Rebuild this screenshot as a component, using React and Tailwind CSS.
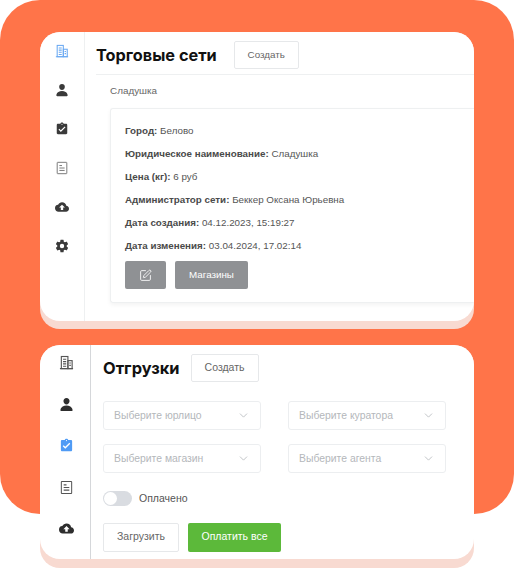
import {MdAssignmentTurnedIn, MdCloudUpload} from "react-icons/md";
import {IoPerson, IoSettingsSharp} from "react-icons/io5";
import {ChevronDown, SquarePen} from "lucide-react";

const font = "font-['Liberation_Sans',Arial,sans-serif]";

function BuildingIcon({className}) {
    return (
        <svg viewBox="0 0 16 16" className={className} fill="none" stroke="currentColor" strokeWidth="1.2">
            <path d="M1 14.5h14" />
            <rect x="2.5" y="1.6" width="7" height="12.9" />
            <rect x="9.5" y="6" width="4.5" height="8.5" />
            <path d="M4.3 4.5h3.4M4.3 7h3.4M4.3 9.5h3.4M4.3 12h3.4M11 8.5h1.6M11 11h1.6" />
        </svg>
    );
}

function DocIcon({className}) {
    return (
        <svg viewBox="0 0 16 16" className={className} fill="none" stroke="currentColor" strokeWidth="1.1">
            <rect x="2.5" y="1.5" width="11" height="13" rx="0.6" />
            <path d="M5 5.2h3M5 8h6M5 10.8h6" />
        </svg>
    );
}

function Row({label, value}) {
    return (
        <p className="h-[23px] text-[9.8px] leading-[23px] text-[#555]">
            <b className="font-bold text-[#4a4a4a]">{label}:</b> {value}
        </p>
    );
}

function Select({text}) {
    return (
        <div className="flex h-[29px] w-[158px] items-center justify-between rounded-[3px] border border-[#eceef0] pl-[10px] pr-[10px] text-[10.4px] text-[#b4b7bb]">
            <span>{text}</span>
            <ChevronDown className="h-[13px] w-[13px] text-[#b4b7bb]" strokeWidth={1.5} />
        </div>
    );
}

function Chains() {
    return (
        <div className="h-[297px] rounded-[20px] bg-[#f8dad1]">
            <div className="flex h-[289px] overflow-hidden rounded-[20px] bg-white">
                <aside className="flex w-[45px] shrink-0 flex-col items-center gap-[25px] border-r border-[#eef0f1] pt-[12px] pr-px text-[#3a3a3a]">
                    <BuildingIcon className="h-[14px] w-[14px] text-[#6aa9f2]" />
                    <IoPerson className="h-[14px] w-[14px]" />
                    <MdAssignmentTurnedIn className="h-[14px] w-[14px]" />
                    <DocIcon className="h-[14px] w-[14px] text-[#777]" />
                    <MdCloudUpload className="h-[14px] w-[14px]" />
                    <IoSettingsSharp className="h-[14px] w-[14px]" />
                </aside>
                <main className="min-w-0 flex-1 pl-[11px]">
                    <div className="flex h-[43px] items-start gap-[17px] border-b border-[#eef0f1] pt-[9px]">
                        <h1 className="font-['Inter',sans-serif] text-[16.3px] leading-[28px] font-bold text-[#111]">Торговые сети</h1>
                        <button className="h-[28px] w-[65px] rounded-[2px] border border-[#e6e8ea] text-[9.8px] text-[#666]">Создать</button>
                    </div>
                    <div className="ml-[14px] flex h-[33px] items-center text-[9.9px] text-[#666]">Сладушка</div>
                    <div className="ml-[14px] h-[195px] rounded-l-[3px] border-t border-l border-b border-[#eef0f1] pt-[10px] pl-[14px] shadow-[0_2px_4px_rgba(0,0,0,0.05)]">
                        <Row label="Город" value="Белово" />
                        <Row label="Юридическое наименование" value="Сладушка" />
                        <Row label="Цена (кг)" value="6 руб" />
                        <Row label="Администратор сети" value="Беккер Оксана Юрьевна" />
                        <Row label="Дата создания" value="04.12.2023, 15:19:27" />
                        <Row label="Дата изменения" value="03.04.2024, 17.02:14" />
                        <div className="mt-[4px] flex gap-[9px]">
                            <button className="flex h-[28px] w-[41px] items-center justify-center rounded-[2px] bg-[#8f9194] text-white">
                                <SquarePen className="h-[13px] w-[13px]" strokeWidth={1.6} />
                            </button>
                            <button className="h-[28px] w-[73px] rounded-[2px] bg-[#8f9194] text-[9.8px] text-white">Магазины</button>
                        </div>
                    </div>
                </main>
            </div>
        </div>
    );
}

function Shipments() {
    return (
        <div className="mt-[16px] h-[223px] rounded-[20px] bg-[#f8dad1]">
            <div className="flex h-[214px] overflow-hidden rounded-[20px] bg-white">
                <aside className="flex w-[51px] shrink-0 flex-col items-center gap-[26.5px] border-r border-[#d5d7da] pt-[10px] pl-[3px] text-[#2e2e2e]">
                    <BuildingIcon className="h-[15px] w-[15px] text-[#555]" />
                    <IoPerson className="h-[15px] w-[15px]" />
                    <MdAssignmentTurnedIn className="h-[15px] w-[15px] text-[#4f9bf5]" />
                    <DocIcon className="h-[15px] w-[15px] text-[#555]" />
                    <MdCloudUpload className="h-[15px] w-[15px]" />
                </aside>
                <main className="min-w-0 flex-1 pl-[12px] pt-[9px]">
                    <div className="flex items-center gap-[11px]">
                        <h1 className="font-['Inter',sans-serif] text-[16.4px] leading-[28px] font-bold text-[#111]">Отгрузки</h1>
                        <button className="h-[28px] w-[68px] rounded-[2px] border border-[#e6e8ea] text-[10.5px] text-[#666]">Создать</button>
                    </div>
                    <div className="mt-[19px] grid w-[343px] grid-cols-[158px_158px] justify-between gap-y-[14px]">
                        <Select text="Выберите юрлицо" />
                        <Select text="Выберите куратора" />
                        <Select text="Выберите магазин" />
                        <Select text="Выберите агента" />
                    </div>
                    <div className="mt-[18px] flex items-center gap-[7px]">
                        <div className="flex h-[15px] w-[29px] items-center rounded-full bg-[#d9dce1] pl-[1px]">
                            <div className="h-[13px] w-[13px] rounded-full bg-white" />
                        </div>
                        <span className="text-[10.5px] text-[#555]">Оплачено</span>
                    </div>
                    <div className="mt-[16px] flex gap-[9px]">
                        <button className="h-[29px] w-[76px] rounded-[2px] border border-[#e6e8ea] text-[10.5px] text-[#666]">Загрузить</button>
                        <button className="h-[29px] w-[93px] rounded-[2px] bg-[#5cb93a] text-[10.5px] text-white">Оплатить все</button>
                    </div>
                </main>
            </div>
        </div>
    );
}

export default function App() {
    return (
        <div className={`h-[568px] w-[514px] overflow-hidden bg-white ${font}`}>
            <div className="h-[514px] rounded-[40px] bg-[#ff7449] px-[40px] pt-[32px]">
                <Chains />
                <Shipments />
            </div>
        </div>
    );
}
